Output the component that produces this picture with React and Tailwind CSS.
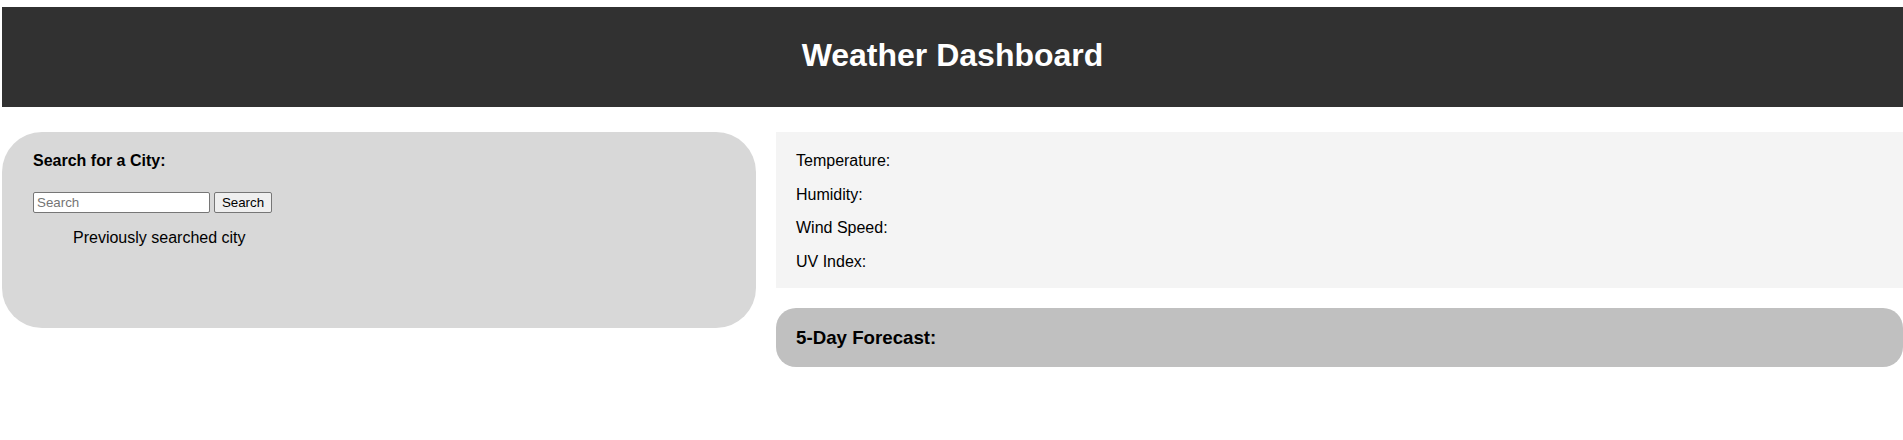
export default function App() {
  return (
    <div className="bg-white min-h-[440px] pl-[2px] pt-[7px] text-black" style={{ fontFamily: '"Liberation Sans", Arial, sans-serif' }}>
      <header className="h-[100px] bg-[#313131] flex items-center justify-center">
        <h1 className="text-white text-[32px] font-bold leading-[37px] -mt-[4px]">Weather Dashboard</h1>
      </header>
      <div className="flex gap-[20px] mt-[25px]">
        <section className="w-[754px] h-[196px] bg-[#d8d8d8] rounded-[40px] pt-[20px] pl-[31px] pr-[30px]">
          <h4 className="text-[16px] font-bold leading-[18.4px]">Search for a City:</h4>
          <form className="mt-[22px] flex items-center gap-[4px]" onSubmit={(e) => e.preventDefault()}>
            <input
              type="text"
              placeholder="Search"
              className="w-[177px] h-[21px] bg-white border border-[#767676] rounded-[2px] px-[3px] text-[13.33px] leading-[15px] placeholder:text-[#757575] outline-none"
            />
            <button
              type="submit"
              className="w-[58px] h-[21px] bg-[#efefef] border border-[#767676] rounded-[2px] text-[13.33px] leading-[15px] flex items-center justify-center"
            >
              Search
            </button>
          </form>
          <ul className="mt-[16px] pl-[40px] list-none">
            <li className="text-[16px] leading-[18.4px]">Previously searched city</li>
          </ul>
        </section>
        <div className="flex-1 flex flex-col gap-[20px]">
          <section className="h-[156px] bg-[#f4f4f4] pt-[20px] px-[20px] flex flex-col gap-[15.3px]">
            <p className="text-[16px] leading-[18.4px]">Temperature:</p>
            <p className="text-[16px] leading-[18.4px]">Humidity:</p>
            <p className="text-[16px] leading-[18.4px]">Wind Speed:</p>
            <p className="text-[16px] leading-[18.4px]">UV Index:</p>
          </section>
          <section className="h-[59px] bg-[#c0c0c0] rounded-[20px] px-[20px] flex items-center">
            <h3 className="text-[18.72px] font-bold leading-[21.5px]">5-Day Forecast:</h3>
          </section>
        </div>
      </div>
    </div>
  );
}
